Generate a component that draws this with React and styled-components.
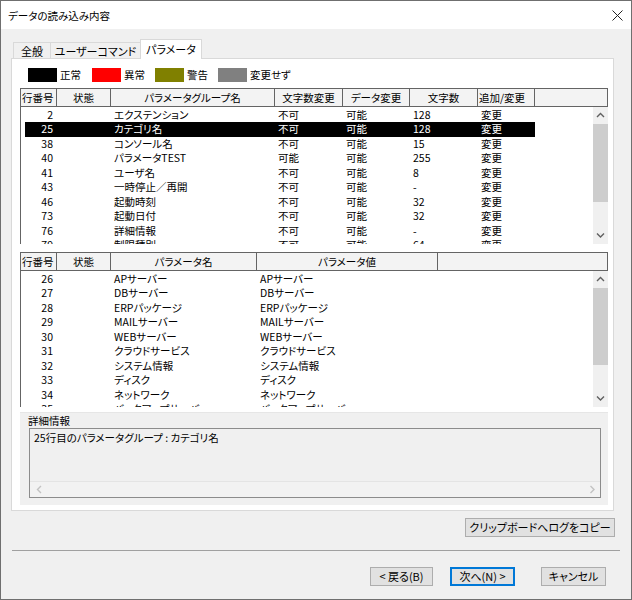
import React from 'react';
import styled, { createGlobalStyle } from 'styled-components';

const UI_FONT = `"Noto Sans CJK JP", "Noto Sans", "Liberation Sans", sans-serif`;

const GlobalStyle = createGlobalStyle`
  html, body { margin: 0; padding: 0; background: #f0f0f0; }
  body { font-family: ${UI_FONT}; }
`;

const groupRows = [
  { no: '2', name: 'エクステンション', lenChg: '不可', dataChg: '可能', len: '128', mode: '変更' },
  { no: '25', name: 'カテゴリ名', lenChg: '不可', dataChg: '可能', len: '128', mode: '変更', selected: true },
  { no: '38', name: 'コンソール名', lenChg: '不可', dataChg: '可能', len: '15', mode: '変更' },
  { no: '40', name: 'パラメータTEST', lenChg: '可能', dataChg: '可能', len: '255', mode: '変更' },
  { no: '41', name: 'ユーザ名', lenChg: '不可', dataChg: '可能', len: '8', mode: '変更' },
  { no: '43', name: '一時停止／再開', lenChg: '不可', dataChg: '可能', len: '-', mode: '変更' },
  { no: '46', name: '起動時刻', lenChg: '不可', dataChg: '可能', len: '32', mode: '変更' },
  { no: '73', name: '起動日付', lenChg: '不可', dataChg: '可能', len: '32', mode: '変更' },
  { no: '76', name: '詳細情報', lenChg: '不可', dataChg: '可能', len: '-', mode: '変更' },
  { no: '79', name: '制限種別', lenChg: '不可', dataChg: '可能', len: '64', mode: '変更' },
];

const paramRows = [
  ['26', 'APサーバー'],
  ['27', 'DBサーバー'],
  ['28', 'ERPパッケージ'],
  ['29', 'MAILサーバー'],
  ['30', 'WEBサーバー'],
  ['31', 'クラウドサービス'],
  ['32', 'システム情報'],
  ['33', 'ディスク'],
  ['34', 'ネットワーク'],
  ['35', 'バックアップサーバー'],
];

const groupCols = [
  { label: '行番号', w: 37, align: 'left' },
  { label: '状態', w: 54 },
  { label: 'パラメータグループ名', w: 164 },
  { label: '文字数変更', w: 68 },
  { label: 'データ変更', w: 67 },
  { label: '文字数', w: 68 },
  { label: '追加/変更', w: 57, align: 'left' },
  { label: '', w: 0 },
];

const paramCols = [
  { label: '行番号', w: 37, align: 'left' },
  { label: '状態', w: 54 },
  { label: 'パラメータ名', w: 146 },
  { label: 'パラメータ値', w: 181 },
  { label: '', w: 0 },
];

const Window = styled.div`
  width: 632px;
  height: 600px;
  box-sizing: border-box;
  border: 1px solid #6f6f6f;
  background: #f0f0f0;
  display: flex;
  flex-direction: column;
  overflow: hidden;
  font-family: ${UI_FONT};
  font-size: 10.5px;
  font-feature-settings: "palt";
  color: #000;
`;

const TitleBar = styled.div`
  height: 28px;
  flex: none;
  background: #fff;
  display: flex;
  align-items: center;
  justify-content: space-between;
  padding: 0 8px 0 7px;
  font-size: 10.5px;
`;

const Body = styled.div`
  flex: 1;
  display: flex;
  flex-direction: column;
  padding: 10px 0 0 10px;
`;

const TabStrip = styled.div`
  display: flex;
  align-items: flex-end;
  height: 20px;
  padding-left: 3px;
  margin-bottom: -1px;
  position: relative;
  z-index: 1;
`;

const Tab = styled.div`
  box-sizing: border-box;
  width: ${p => p.$w}px;
  height: ${p => (p.$active ? 20 : 17)}px;
  border: 1px solid #d9d9d9;
  border-bottom: ${p => (p.$active ? 'none' : '1px solid #d9d9d9')};
  background: ${p => (p.$active ? '#fff' : '#f0f0f0')};
  margin-left: -1px;
  display: flex;
  align-items: center;
  justify-content: center;
  font-size: 11px;
  padding-bottom: ${p => (p.$active ? 2 : 0)}px;
`;

const Panel = styled.div`
  box-sizing: border-box;
  width: 603px;
  height: 453px;
  border: 1px solid #d9d9d9;
  background: #fff;
  padding: 8px 0 0 8px;
  display: flex;
  flex-direction: column;
`;

const Legend = styled.div`
  display: flex;
  align-items: center;
  height: 15px;
  padding-left: 8px;
`;

const LegendItem = styled.div`
  display: flex;
  align-items: center;
  width: ${p => p.$w}px;
`;

const Swatch = styled.span`
  width: 29px;
  height: 14px;
  background: ${p => p.$color};
  margin-right: 3px;
`;

const Table = styled.div`
  width: 588px;
  margin-top: ${p => p.$gap}px;
  display: flex;
  flex-direction: column;
`;

const HeaderRow = styled.div`
  display: flex;
  height: 19px;
  box-sizing: border-box;
  border-top: 1px solid #646464;
  border-bottom: 1px solid #646464;
  border-left: 1px solid #646464;
  background: #f3f3f3;
`;

const HeaderCell = styled.div`
  box-sizing: border-box;
  ${p => (p.$w ? `width: ${p.$w}px;` : 'flex: 1;')}
  border-right: 1px solid #646464;
  line-height: 17px;
  white-space: nowrap;
  overflow: hidden;
  text-align: ${p => p.$align || 'center'};
  padding-left: ${p => (p.$align === 'left' ? 1 : 0)}px;
`;

const ListBody = styled.div`
  display: flex;
  height: ${p => p.$h}px;
  border-left: 1px solid #646464;
  background: #fff;
  overflow: hidden;
`;

const Rows = styled.div`
  flex: 1;
  padding-top: 1px;
  padding-left: 4px;
`;

const Row = styled.div`
  display: flex;
  width: ${p => p.$w}px;
  height: 14.45px;
  line-height: 14.45px;
  white-space: nowrap;
  background: ${p => (p.$selected ? '#000' : 'transparent')};
  color: ${p => (p.$selected ? '#fff' : '#000')};
`;

const Cell = styled.div`
  width: ${p => p.$w}px;
  flex: none;
  overflow: hidden;
  text-align: ${p => p.$align || 'left'};
  padding: 0 ${p => (p.$align === 'right' ? 4 : 0)}px 0 ${p => (p.$align === 'right' ? 0 : 3)}px;
  box-sizing: border-box;
`;

const ScrollBar = styled.div`
  width: 15px;
  flex: none;
  background: #f0f0f0;
  display: flex;
  flex-direction: column;
`;

const ArrowBox = styled.div`
  height: 17px;
  flex: none;
  display: flex;
  align-items: center;
  justify-content: center;
`;

const Track = styled.div`
  flex: 1;
`;

const Thumb = styled.div`
  height: ${p => p.$h}px;
  background: #cdcdcd;
`;

const DetailGroup = styled.div`
  box-sizing: border-box;
  width: 588px;
  height: 93px;
  margin-top: 5px;
  background: #f0f0f0;
  border-top: 1px solid #e6e6e6;
  padding: 1px 7px 0 8px;
  display: flex;
  flex-direction: column;
`;

const GroupLabel = styled.div`
  height: 14px;
  line-height: 14px;
`;

const TextBox = styled.div`
  box-sizing: border-box;
  width: 572px;
  height: 70px;
  margin-left: 1px;
  border: 1px solid #8c8c8c;
  background: #f0f0f0;
  display: flex;
  flex-direction: column;
`;

const TextLine = styled.div`
  flex: 1;
  padding: 2px 4px;
  line-height: 14px;
`;

const HScroll = styled.div`
  height: 15px;
  border-top: 1px solid #e4e4e4;
  background: #f2f2f2;
  display: flex;
  align-items: center;
  justify-content: space-between;
  padding: 0 4px 0 6px;
`;

const CopyRow = styled.div`
  display: flex;
  justify-content: flex-end;
  padding-right: 16px;
  margin-top: 7px;
`;

const Button = styled.button`
  box-sizing: border-box;
  width: ${p => p.$w}px;
  height: 19px;
  padding: 0;
  margin-left: ${p => p.$ml || 0}px;
  border: 1px solid ${p => (p.$focus ? '#0078d7' : '#adadad')};
  box-shadow: ${p => (p.$focus ? 'inset 0 0 0 1px #0078d7' : 'none')};
  background: #e1e1e1;
  font-family: ${UI_FONT};
  font-size: 11px;
  font-feature-settings: "palt";
  color: #000;
  line-height: 17px;
`;

const Separator = styled.div`
  height: 1px;
  background: #a0a0a0;
  margin: 13px 11px 0 1px;
`;

const ButtonRow = styled.div`
  display: flex;
  justify-content: flex-end;
  padding-right: 25px;
  margin-top: 16px;
`;

const Chevron = ({ dir = 'up', color = '#606060' }) => {
  const d = {
    up: 'M1 5 L4.5 1.5 L8 5',
    down: 'M1 1.5 L4.5 5 L8 1.5',
    left: 'M5 1 L1.5 4.5 L5 8',
    right: 'M1.5 1 L5 4.5 L1.5 8',
  }[dir];
  const horiz = dir === 'left' || dir === 'right';
  return (
    <svg width={horiz ? 7 : 9} height={horiz ? 9 : 7} viewBox={horiz ? '0 0 7 9' : '0 0 9 7'}>
      <path d={d} stroke={color} strokeWidth="1.4" fill="none" />
    </svg>
  );
};

const VScroll = ({ thumb }) => (
  <ScrollBar>
    <ArrowBox><Chevron dir="up" /></ArrowBox>
    <Track><Thumb $h={thumb} /></Track>
    <ArrowBox><Chevron dir="down" /></ArrowBox>
  </ScrollBar>
);

const Header = ({ cols }) => (
  <HeaderRow>
    {cols.map((c, i) => (
      <HeaderCell key={i} $w={i === 0 ? c.w - 1 : c.w} $align={c.align}>{c.label}</HeaderCell>
    ))}
  </HeaderRow>
);

export default function App() {
  return (
    <>
      <GlobalStyle />
      <Window>
        <TitleBar>
          <span>データの読み込み内容</span>
          <svg width="11" height="11" viewBox="0 0 11 11">
            <path d="M0.5 0.5 L10.5 10.5 M10.5 0.5 L0.5 10.5" stroke="#222" strokeWidth="1" fill="none" />
          </svg>
        </TitleBar>
        <Body>
          <TabStrip>
            <Tab $w={38}>全般</Tab>
            <Tab $w={91}>ユーザーコマンド</Tab>
            <Tab $w={62} $active>パラメータ</Tab>
          </TabStrip>
          <Panel>
            <Legend>
              <LegendItem $w={64}><Swatch $color="#000" />正常</LegendItem>
              <LegendItem $w={63}><Swatch $color="#ff0000" />異常</LegendItem>
              <LegendItem $w={63}><Swatch $color="#808000" />警告</LegendItem>
              <LegendItem $w={90}><Swatch $color="#808080" />変更せず</LegendItem>
            </Legend>

            <Table $gap={6}>
              <Header cols={groupCols} />
              <ListBody $h={137}>
                <Rows>
                  {groupRows.map(r => (
                    <Row key={r.no} $w={510} $selected={r.selected}>
                      <Cell $w={32} $align="right">{r.no}</Cell>
                      <Cell $w={54} />
                      <Cell $w={164}>{r.name}</Cell>
                      <Cell $w={68}>{r.lenChg}</Cell>
                      <Cell $w={67}>{r.dataChg}</Cell>
                      <Cell $w={68}>{r.len}</Cell>
                      <Cell $w={57}>{r.mode}</Cell>
                    </Row>
                  ))}
                </Rows>
                <VScroll thumb={78} />
              </ListBody>
            </Table>

            <Table $gap={8}>
              <Header cols={paramCols} />
              <ListBody $h={136}>
                <Rows>
                  {paramRows.map(([no, name]) => (
                    <Row key={no} $w={413}>
                      <Cell $w={32} $align="right">{no}</Cell>
                      <Cell $w={54} />
                      <Cell $w={146}>{name}</Cell>
                      <Cell $w={181}>{name}</Cell>
                    </Row>
                  ))}
                </Rows>
                <VScroll thumb={77} />
              </ListBody>
            </Table>

            <DetailGroup>
              <GroupLabel>詳細情報</GroupLabel>
              <TextBox>
                <TextLine>25行目のパラメータグループ : カテゴリ名</TextLine>
                <HScroll>
                  <Chevron dir="left" color="#c2c2c2" />
                  <Chevron dir="right" color="#c2c2c2" />
                </HScroll>
              </TextBox>
            </DetailGroup>
          </Panel>

          <CopyRow>
            <Button $w={150}>クリップボードへログをコピー</Button>
          </CopyRow>
          <Separator />
          <ButtonRow>
            <Button $w={63}>&lt; 戻る(B)</Button>
            <Button $w={65} $ml={17} $focus>次へ(N) &gt;</Button>
            <Button $w={65} $ml={26}>キャンセル</Button>
          </ButtonRow>
        </Body>
      </Window>
    </>
  );
}
